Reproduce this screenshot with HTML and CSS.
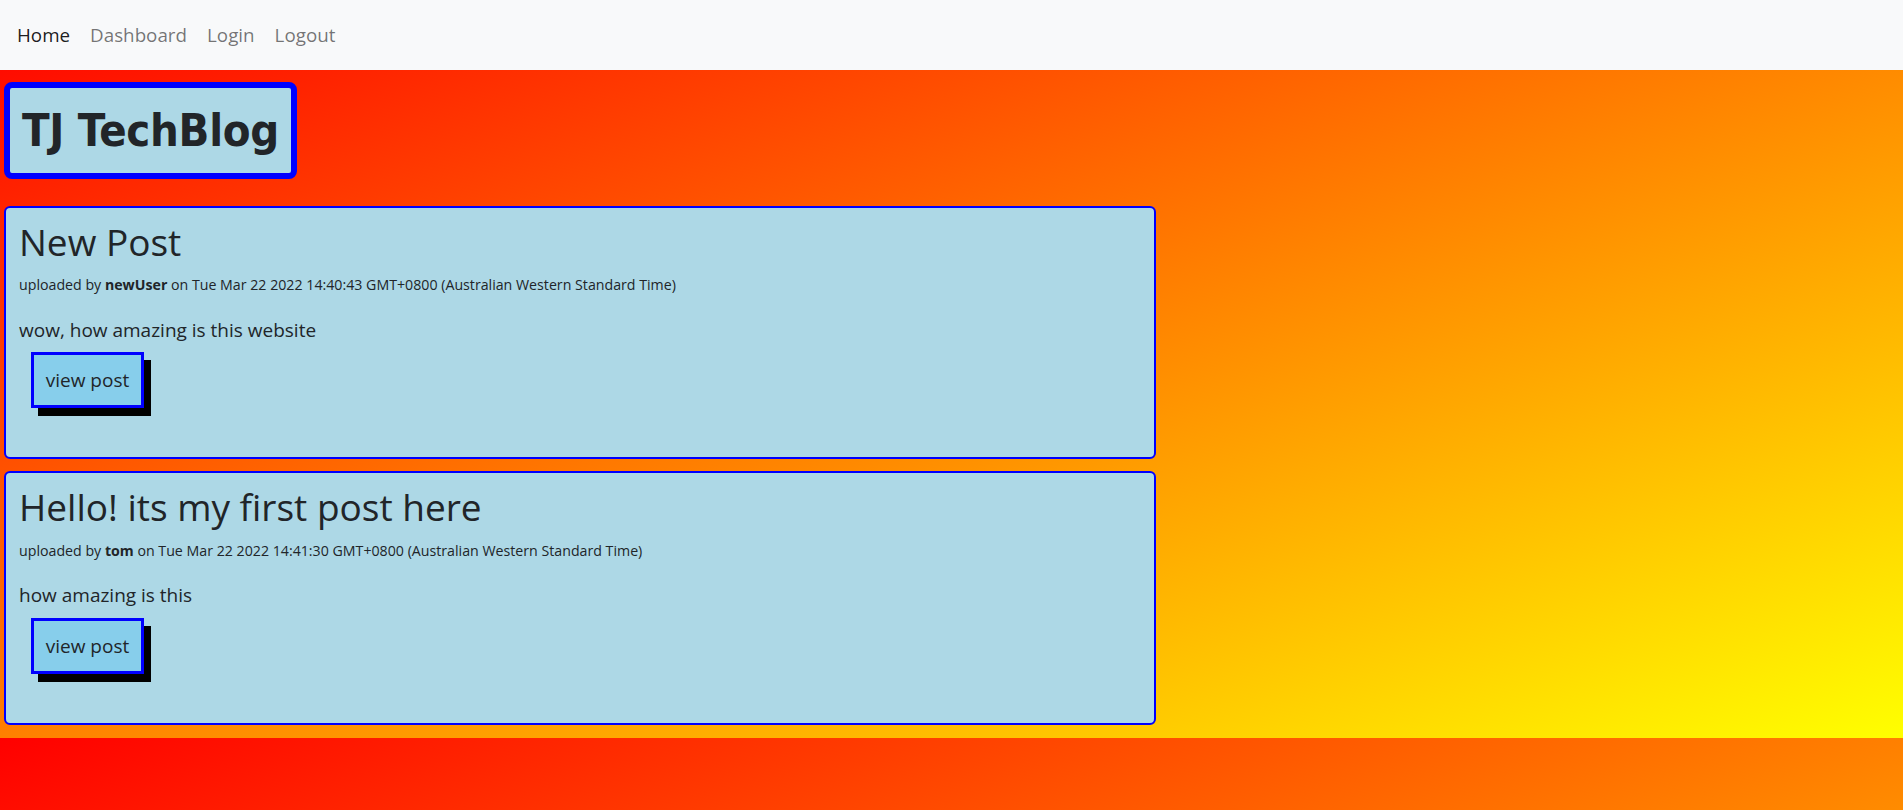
FILE: index.html
```html
<!DOCTYPE html>
<html lang="en">
<head>
<meta charset="utf-8">
<title>TJ TechBlog</title>
<link rel="stylesheet" href="styles.css">
</head>
<body>
<nav class="navbar">
  <a class="nav-link active" href="#">Home</a>
  <a class="nav-link" href="#">Dashboard</a>
  <a class="nav-link" href="#">Login</a>
  <a class="nav-link" href="#">Logout</a>
</nav>
<main class="main">
  <header class="site-header"><h1 class="site-title">TJ TechBlog</h1></header>
  <section class="posts">
    <article class="post-card">
      <h2 class="post-title">New Post</h2>
      <p class="post-meta">uploaded by <strong>newUser</strong> on Tue Mar 22 2022 14:40:43 GMT+0800 (Australian Western Standard Time)</p>
      <p class="post-body">wow, how amazing is this website</p>
      <a class="view-btn" href="#">view post</a>
    </article>
    <article class="post-card">
      <h2 class="post-title">Hello! its my first post here</h2>
      <p class="post-meta">uploaded by <strong>tom</strong> on Tue Mar 22 2022 14:41:30 GMT+0800 (Australian Western Standard Time)</p>
      <p class="post-body">how amazing is this</p>
      <a class="view-btn" href="#">view post</a>
    </article>
  </section>
</main>
</body>
</html>
```

FILE: styles.css
```css
html, body {
  margin: 0;
  padding: 0;
}

body {
  background: linear-gradient(to bottom right, #ff0000, #ffff00);
  font-family: "Open Sans", "Noto Sans", sans-serif;
  color: #212529;
}

.navbar {
  height: 70px;
  box-sizing: border-box;
  background: #f8f9fa;
  display: flex;
  align-items: center;
  gap: 20px;
  padding-left: 17px;
}

.nav-link {
  font-size: 18.8px;
  line-height: 1.5;
  color: rgba(0, 0, 0, 0.55);
  text-decoration: none;
}

.nav-link.active {
  color: rgba(0, 0, 0, 0.9);
}

.main {
  padding: 12px 4px 13px;
  display: flex;
  flex-direction: column;
}

.site-header {
  width: 293px;
  height: 97px;
  box-sizing: border-box;
  border: 6px solid #0000ff;
  border-radius: 8px;
  background: #add8e6;
  display: flex;
  align-items: center;
  padding-left: 12px;
}

.site-title {
  margin: 0;
  font-family: "DejaVu Sans Condensed", "DejaVu Sans", sans-serif;
  font-stretch: condensed;
  font-weight: 700;
  font-size: 45px;
  letter-spacing: -0.3px;
  line-height: 1;
  white-space: nowrap;
  color: #212529;
}

.posts {
  margin-top: 27px;
  display: flex;
  flex-direction: column;
  gap: 12px;
}

.post-card {
  width: 1152px;
  box-sizing: border-box;
  border: 2px solid #0000ff;
  border-radius: 6px;
  background: #add8e6;
  padding: 12px 13px 49px;
  display: flex;
  flex-direction: column;
  align-items: flex-start;
}

.post-title {
  margin: 0 0 11px;
  font-size: 37px;
  font-weight: 500;
  line-height: 1.2;
}

.post-meta {
  margin: 0;
  font-size: 14.2px;
  line-height: 1.45;
}

.post-meta strong {
  font-weight: 700;
}

.post-body {
  margin: 20px 0 8px;
  font-size: 19px;
  line-height: 1.5;
}

.view-btn {
  margin-left: 12px;
  width: 113px;
  height: 56px;
  box-sizing: border-box;
  border: 3px solid #0000ff;
  background: #87ceeb;
  box-shadow: 7px 8px 0 #000;
  display: flex;
  align-items: center;
  justify-content: center;
  font-size: 19px;
  line-height: 1.5;
  color: #212529;
  text-decoration: none;
}
```
